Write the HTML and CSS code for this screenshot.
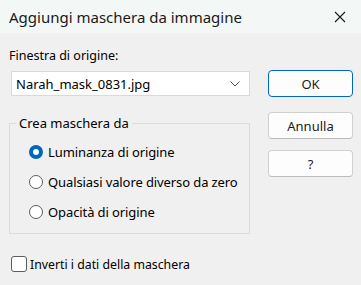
FILE: index.html
```html
<!DOCTYPE html>
<html lang="it">
<head>
    <meta charset="UTF-8">
    <title>Aggiungi maschera da immagine</title>
    <link rel="stylesheet" href="styles.css">
</head>
<body>
    <div class="dialog">
        <div class="titlebar">
            <span class="title">Aggiungi maschera da immagine</span>
            <svg class="close" width="12" height="12" viewBox="0 0 12 12">
                <path d="M1 1 L11 11 M11 1 L1 11" stroke="#1a1a1a" stroke-width="1.1" fill="none"/>
            </svg>
        </div>

        <div class="content">
            <div class="left">
                <div class="label">Finestra di origine:</div>
                <div class="combo">
                    <span>Narah_mask_0831.jpg</span>
                    <svg width="10" height="6" viewBox="0 0 10 6">
                        <path d="M0.5 0.5 L5 5 L9.5 0.5" stroke="#555" stroke-width="1" fill="none"/>
                    </svg>
                </div>

                <div class="group">
                    <div class="legend">Crea maschera da</div>
                    <div class="option"><span class="radio checked"></span>Luminanza di origine</div>
                    <div class="option"><span class="radio"></span>Qualsiasi valore diverso da zero</div>
                    <div class="option"><span class="radio"></span>Opacità di origine</div>
                </div>

                <div class="check-row"><span class="checkbox"></span>Inverti i dati della maschera</div>
            </div>

            <div class="right">
                <button class="btn default">OK</button>
                <button class="btn">Annulla</button>
                <button class="btn">?</button>
            </div>
        </div>
    </div>
</body>
</html>
```

FILE: styles.css
```css
* {
    box-sizing: border-box;
}

body {
    margin: 0;
    background: #f0f0f0;
    color: #000000;
    font-family: "Noto Sans", "Open Sans", sans-serif;
    font-size: 12px;
}

.dialog {
    width: 361px;
    height: 285px;
    overflow: hidden;
}

.titlebar {
    height: 33px;
    background: #f3f8f7;
    display: flex;
    align-items: center;
    justify-content: space-between;
    padding: 0 15px 0 9px;
}

.title {
    font-size: 15px;
    color: #1a1a1a;
}

.content {
    display: flex;
    padding: 14px 0 0 9px;
}

.left {
    width: 241px;
}

.label {
    height: 24px;
    line-height: 18px;
    font-size: 12.5px;
}

.combo {
    margin-left: 2px;
    height: 25px;
    border: 1px solid #d9d9d9;
    background: #ffffff;
    display: flex;
    align-items: center;
    justify-content: space-between;
    padding: 0 9px 0 4px;
    font-size: 13px;
}

.group {
    margin-top: 27px;
    height: 111px;
    border: 1px solid #dcdcdc;
    position: relative;
    padding: 13px 0 0 19px;
}

.legend {
    position: absolute;
    top: -10px;
    left: 6px;
    padding: 0 3px;
    background: #f0f0f0;
    font-size: 13px;
}

.option {
    display: flex;
    align-items: center;
    height: 30px;
    font-size: 13px;
    letter-spacing: -0.1px;
}

.radio {
    width: 14px;
    height: 14px;
    border: 1px solid #5c5c5c;
    border-radius: 50%;
    background: #ffffff;
    margin-right: 5px;
}

.radio.checked {
    border: 4px solid #0067c0;
}

.check-row {
    display: flex;
    align-items: center;
    height: 18px;
    margin-top: 21px;
    margin-left: 2px;
    font-size: 12.3px;
}

.checkbox {
    width: 16px;
    height: 16px;
    border: 1px solid #5c5c5c;
    border-radius: 3px;
    background: #ffffff;
    margin-right: 3px;
}

.right {
    display: flex;
    flex-direction: column;
    margin-left: 18px;
    padding-top: 23px;
}

.btn {
    width: 85px;
    height: 27px;
    margin-bottom: 14px;
    background: #fdfdfd;
    border: 1px solid #d0d0d0;
    border-bottom-color: #bcbcbc;
    border-radius: 4px;
    font-family: "Noto Sans", "Open Sans", sans-serif;
    font-size: 13px;
    color: #1a1a1a;
    padding: 0;
}

.btn.default {
    border: 1px solid #0067c0;
    margin-bottom: 15px;
}

.btn:last-child {
    margin-top: -3px;
}
```
